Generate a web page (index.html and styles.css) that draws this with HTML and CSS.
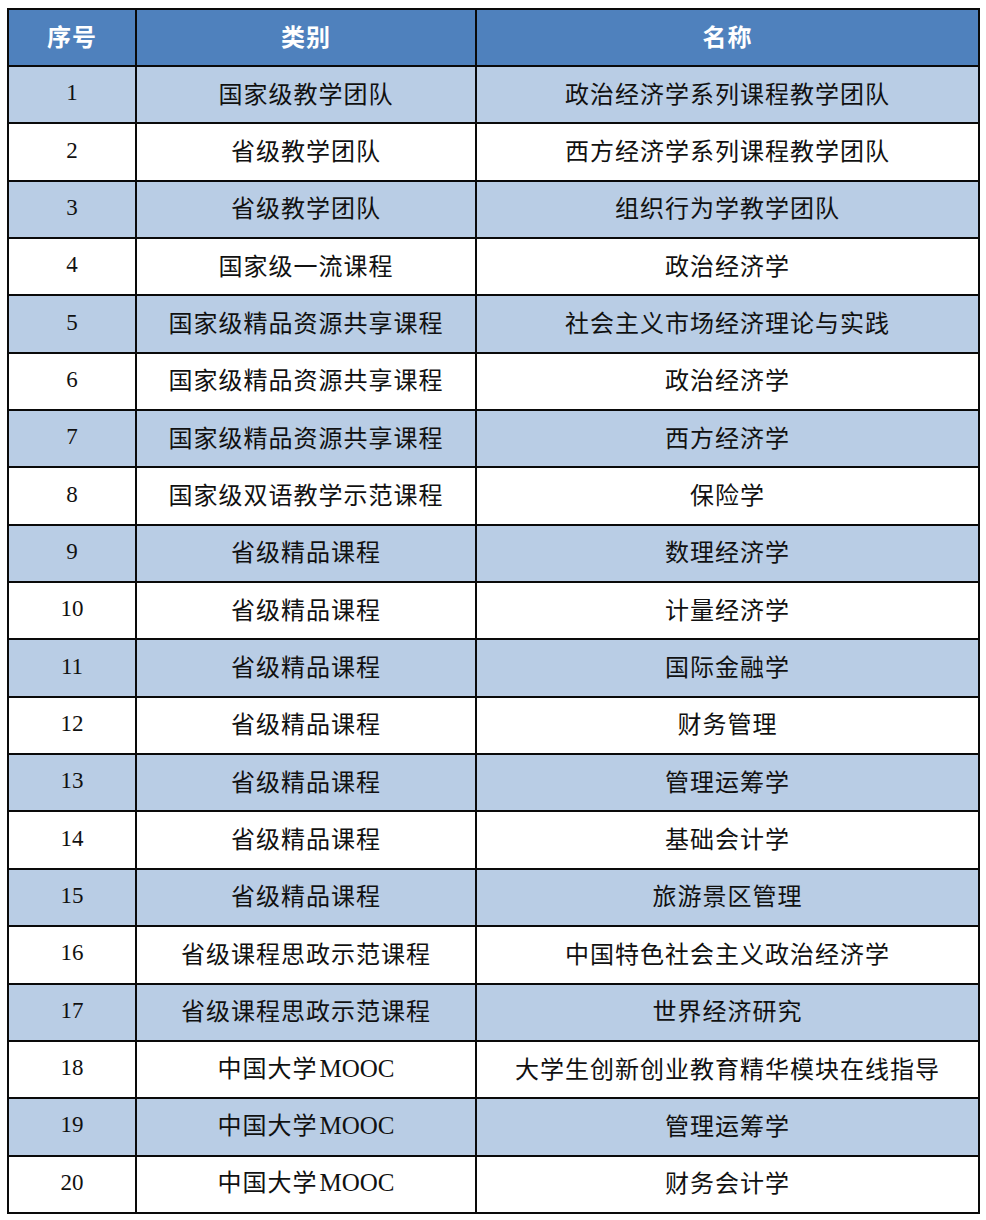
FILE: index.html
```html
<!DOCTYPE html>
<html lang="zh">
<head>
<meta charset="utf-8">
<link rel="stylesheet" href="styles.css">
</head>
<body>
<table class="list">
  <colgroup><col class="c1"><col class="c2"><col class="c3"></colgroup>
  <thead>
    <tr><th>序号</th><th>类别</th><th>名称</th></tr>
  </thead>
  <tbody>
    <tr class="alt"><td class="num">1</td><td>国家级教学团队</td><td>政治经济学系列课程教学团队</td></tr>
    <tr><td class="num">2</td><td>省级教学团队</td><td>西方经济学系列课程教学团队</td></tr>
    <tr class="alt"><td class="num">3</td><td>省级教学团队</td><td>组织行为学教学团队</td></tr>
    <tr><td class="num">4</td><td>国家级一流课程</td><td>政治经济学</td></tr>
    <tr class="alt"><td class="num">5</td><td>国家级精品资源共享课程</td><td>社会主义市场经济理论与实践</td></tr>
    <tr><td class="num">6</td><td>国家级精品资源共享课程</td><td>政治经济学</td></tr>
    <tr class="alt"><td class="num">7</td><td>国家级精品资源共享课程</td><td>西方经济学</td></tr>
    <tr><td class="num">8</td><td>国家级双语教学示范课程</td><td>保险学</td></tr>
    <tr class="alt"><td class="num">9</td><td>省级精品课程</td><td>数理经济学</td></tr>
    <tr><td class="num">10</td><td>省级精品课程</td><td>计量经济学</td></tr>
    <tr class="alt"><td class="num">11</td><td>省级精品课程</td><td>国际金融学</td></tr>
    <tr><td class="num">12</td><td>省级精品课程</td><td>财务管理</td></tr>
    <tr class="alt"><td class="num">13</td><td>省级精品课程</td><td>管理运筹学</td></tr>
    <tr><td class="num">14</td><td>省级精品课程</td><td>基础会计学</td></tr>
    <tr class="alt"><td class="num">15</td><td>省级精品课程</td><td>旅游景区管理</td></tr>
    <tr><td class="num">16</td><td>省级课程思政示范课程</td><td>中国特色社会主义政治经济学</td></tr>
    <tr class="alt"><td class="num">17</td><td>省级课程思政示范课程</td><td>世界经济研究</td></tr>
    <tr><td class="num">18</td><td>中国大学<span class="lat">MOOC</span></td><td>大学生创新创业教育精华模块在线指导</td></tr>
    <tr class="alt"><td class="num">19</td><td>中国大学<span class="lat">MOOC</span></td><td>管理运筹学</td></tr>
    <tr><td class="num">20</td><td>中国大学<span class="lat">MOOC</span></td><td>财务会计学</td></tr>
  </tbody>
</table>
</body>
</html>
```
FILE: styles.css
```css
html, body {
  margin: 0;
  padding: 0;
  background: #ffffff;
}
body {
  padding: 8px 0 0 7px;
  font-family: "Noto Sans CJK SC", "Noto Sans", sans-serif;
  color: #111111;
}
.list {
  border-collapse: collapse;
  table-layout: fixed;
  width: 971px;
}
.c1 { width: 128px; }
.c2 { width: 340px; }
.c3 { width: 503px; }
.list th, .list td {
  border: 2px solid #0a0a0a;
  text-align: center;
  vertical-align: middle;
  padding: 0 0 4px 0;
}
.list th {
  height: 51px;
  background: #4f81bd;
  color: #ffffff;
  font-weight: 700;
  font-size: 24px;
  letter-spacing: 1px;
}
.list td {
  height: 51.35px;
  font-size: 24px;
  letter-spacing: 1px;
  line-height: 1;
}
.list tr.alt td {
  background: #b9cde5;
}
.list td.num {
  font-family: "Liberation Serif", "Times New Roman", serif;
  font-size: 23px;
  letter-spacing: 0;
}
.lat {
  font-family: "Liberation Serif", "Times New Roman", serif;
  font-size: 25px;
  letter-spacing: 0;
  margin-left: 2px;
}
```
